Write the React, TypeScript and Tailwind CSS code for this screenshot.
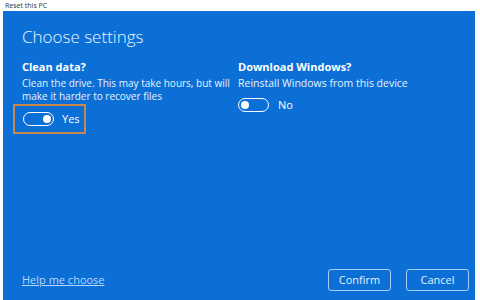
import React from 'react'

const Toggle = ({ on }: { on: boolean }) => (
  <div
    className={`w-[31px] h-[14px] rounded-full border-[1.5px] border-white flex items-center px-[2px] ${
      on ? 'justify-end' : 'justify-start'
    }`}
  >
    <div className="w-[8px] h-[8px] rounded-full bg-white" />
  </div>
)

export default function App() {
  return (
    <div className="w-[480px] h-[300px] bg-white flex flex-col overflow-hidden font-['Open_Sans',sans-serif]">
      {/* title bar, mostly cut off */}
      <div className="h-[11px] pl-[5px] pt-[1px]">
        <span className="block text-[7px] leading-[9px] text-[#333]">Reset this PC</span>
      </div>

      <div className="flex-1 ml-[3px] mr-[5px] bg-[#0c6fd6] text-white flex flex-col px-[19px]">
        <h1 className="mt-[15px] text-[17px] font-light leading-[22px] text-[#eef6ff]">Choose settings</h1>

        <div className="mt-[11px] grid grid-cols-[216px_1fr]">
          <div>
            <div className="text-[11px] font-bold leading-[15px]">Clean data?</div>
            <p className="mt-[3px] w-[210px] text-[10px] leading-[13px] text-[#e8f2fd]">
              Clean the drive. This may take hours, but will make it harder to recover files
            </p>
            <div className="mt-[1px] -ml-[9px] w-[73px] h-[30px] border-2 border-[#c8874b] flex items-center gap-[8px] pl-[8px]">
              <Toggle on />
              <span className="text-[11px]">Yes</span>
            </div>
          </div>
          <div>
            <div className="text-[11px] font-bold leading-[15px]">Download Windows?</div>
            <p className="mt-[3px] text-[10.5px] leading-[13px] text-[#e8f2fd]">
              Reinstall Windows from this device
            </p>
            <div className="mt-[7px] flex items-center gap-[9px]">
              <Toggle on={false} />
              <span className="text-[11px]">No</span>
            </div>
          </div>
        </div>

        <div className="mt-auto mb-[9px] flex items-center justify-between">
          <a className="text-[11px] underline text-[#b5d7fb]">Help me choose</a>
          <div className="flex gap-[15px] -mr-[13px]">
            <button className="w-[63px] h-[22px] rounded-[3px] border-[1.5px] border-[#a6cff6] text-[11px] text-[#e4f0fd]">
              Confirm
            </button>
            <button className="w-[63px] h-[22px] rounded-[3px] border-[1.5px] border-[#a6cff6] text-[11px] text-[#e4f0fd]">
              Cancel
            </button>
          </div>
        </div>
      </div>
    </div>
  )
}
